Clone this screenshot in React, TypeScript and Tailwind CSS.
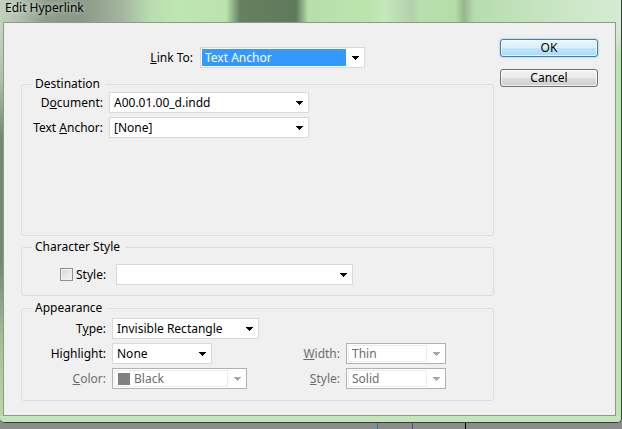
import React from 'react';

const Arrow = ({ disabled }: { disabled?: boolean }) => (
  <svg width="7" height="4" viewBox="0 0 7 4" shapeRendering="crispEdges">
    <path d="M0 0h7v1h-1v1h-1v1h-1v1h-1v-1h-1v-1h-1v-1h-1z" fill={disabled ? '#a6a6a6' : '#000'} />
  </svg>
);

interface SelectProps {
  value: string;
  className: string;
  disabled?: boolean;
  highlighted?: boolean;
  swatch?: boolean;
}

const Select: React.FC<SelectProps> = ({ value, className, disabled, highlighted, swatch }) => {
  if (disabled) {
    return (
      <div className={`flex h-[21px] border border-[#adb2b5] bg-white ${className}`}>
        <div className="m-[1px] flex flex-1 items-center border border-[#ececec] pl-[3px] text-[#6d6d6d]">
          {swatch && <span className="mr-[4px] h-[12px] w-[12px] bg-[#808080]" />}
          {value}
        </div>
        <div className="flex w-[17px] items-center justify-center">
          <Arrow disabled />
        </div>
      </div>
    );
  }
  return (
    <div className={`flex h-[21px] border border-[#d9d9d9] bg-white ${className}`}>
      {highlighted ? (
        <div className="m-[1px] flex-1 bg-[#3399ff] pl-[3px] leading-[17px] text-white">{value}</div>
      ) : (
        <div className="flex-1 pl-[4px] leading-[19px] text-black">{value}</div>
      )}
      <div className="flex w-[17px] items-center justify-center">
        <Arrow />
      </div>
    </div>
  );
};

const Group: React.FC<{ title: string; className: string; children: React.ReactNode }> = ({
  title,
  className,
  children,
}) => (
  <fieldset className={`rounded-[3px] border border-[#d5dfe5] ${className}`}>
    <legend className="ml-[10px] pl-[3px] pr-[6px] leading-[16px] text-black">{title}</legend>
    {children}
  </fieldset>
);

export default function App() {
  return (
    <div className="h-[429px] w-[622px] overflow-hidden bg-[linear-gradient(to_bottom,#454545,#8c8c8c)] font-['Noto_Sans',sans-serif] text-[12px]">
      <div className="flex h-[423px] flex-col overflow-hidden rounded-b-[5px] border-r border-b border-[#34403a] bg-[#c1e5b8]">
        {/* title bar */}
        <div className="h-[22px] bg-[linear-gradient(to_right,#c3d1bf_0px,#aebdaa_22px,#8e9c8a_45px,#8a9886_80px,#a2b39e_120px,#b9dcae_150px,#bee6b1_175px,#bce3ae_226px,#64805f_240px,#5e7a5a_296px,#b6deaa_308px,#bce5ae_372px,#c4e8be_385px,#b2d0ac_412px,#b8dfae_420px,#b3dea8_455px,#99b593_464px,#b6dcad_474px,#c6e4c0_540px,#d6ebd3_622px)] pl-[5px] leading-[16px] text-black [text-shadow:0_0_6px_rgba(255,255,255,0.8)]">
          Edit Hyperlink
        </div>

        <div className="flex">
          <div className="w-[3px] bg-[linear-gradient(to_bottom,#c8d5c4_0%,#aac0a5_15%,#70896b_30%,#728d6d_62%,#9fc096_80%,#b4d8aa_100%)]" />

          {/* client area */}
          <div className="flex h-[394px] w-[613px] border border-[#8c9b89] bg-[#f0f0f0]">
            <div className="flex w-[490px] flex-col pl-[17px] pt-[24px]">
              <div className="flex h-[21px] items-center">
                <span className="w-[172px] text-right leading-[21px] text-black">
                  <u>L</u>ink To:
                </span>
                <Select value="Text Anchor" className="ml-[7px] w-[165px]" highlighted />
              </div>

              <Group title="Destination" className="mt-[8px] h-[160px] w-[473px]">
                <div className="flex flex-col gap-[4px]">
                  <div className="flex items-center">
                    <span className="w-[81px] text-right leading-[21px]">
                      D<u>o</u>cument:
                    </span>
                    <Select value="A00.01.00_d.indd" className="ml-[6px] w-[200px]" />
                  </div>
                  <div className="flex items-center">
                    <span className="w-[81px] text-right leading-[21px]">
                      Text <u>A</u>nchor:
                    </span>
                    <Select value="[None]" className="ml-[6px] w-[200px]" />
                  </div>
                </div>
              </Group>

              <Group title="Character Style" className="mt-[3px] h-[57px] w-[473px]">
                <div className="flex items-center pl-[38px] pt-[9px]">
                  <span className="h-[13px] w-[13px] border border-[#8e8f8f] bg-[linear-gradient(135deg,#d6d6d6,#f7f7f7)] shadow-[inset_0_0_0_1px_#f2f2f2]" />
                  <span className="ml-[3px] w-[40px] leading-[21px]">Style:</span>
                  <Select value="" className="w-[237px]" />
                </div>
              </Group>

              <Group title="Appearance" className="mt-[4px] h-[101px] w-[473px]">
                <div className="flex flex-col gap-[4px] pt-[2px]">
                  <div className="flex items-center">
                    <span className="w-[84px] text-right leading-[21px]">
                      T<u>y</u>pe:
                    </span>
                    <Select value="Invisible Rectangle" className="ml-[6px] w-[147px]" />
                  </div>
                  <div className="flex items-center">
                    <div className="flex w-[230px] items-center">
                      <span className="w-[84px] text-right leading-[21px]">
                        Hi<u>g</u>hlight:
                      </span>
                      <Select value="None" className="ml-[6px] w-[100px]" />
                    </div>
                    <span className="w-[88px] text-right leading-[21px] text-[#6d6d6d]">
                      <u>W</u>idth:
                    </span>
                    <Select value="Thin" className="ml-[6px] w-[100px]" disabled />
                  </div>
                  <div className="flex items-center">
                    <div className="flex w-[230px] items-center">
                      <span className="w-[84px] text-right leading-[21px] text-[#6d6d6d]">
                        <u>C</u>olor:
                      </span>
                      <Select value="Black" className="ml-[6px] w-[135px]" disabled swatch />
                    </div>
                    <span className="w-[88px] text-right leading-[21px] text-[#6d6d6d]">
                      <u>S</u>tyle:
                    </span>
                    <Select value="Solid" className="ml-[6px] w-[100px]" disabled />
                  </div>
                </div>
              </Group>
            </div>

            {/* buttons */}
            <div className="ml-[6px] flex flex-col gap-[12px] pt-[16px]">
              <button className="h-[18px] w-[98px] rounded-[3px] border border-[#3c7fb1] bg-[linear-gradient(to_bottom,#eaf6fd_0%,#d9f0fc_50%,#bee6fd_51%,#a7d9f5_100%)] leading-[16px] text-black shadow-[inset_0_0_0_1px_rgba(255,255,255,0.7),0_0_2px_#5fb6e6]">
                OK
              </button>
              <button className="h-[18px] w-[98px] rounded-[3px] border border-[#707070] bg-[linear-gradient(to_bottom,#f2f2f2_0%,#ebebeb_50%,#dddddd_51%,#cfcfcf_100%)] leading-[16px] text-black shadow-[inset_0_0_0_1px_rgba(255,255,255,0.7)]">
                Cancel
              </button>
            </div>
          </div>

          <div className="flex-1 bg-[linear-gradient(to_bottom,#dde9da_0%,#d2e6cd_4%,#bde2b3_8%,#bfe3b5_100%)]" />
        </div>

        <div className="flex-1 bg-[#c2e5ba]" />
      </div>
      <div className="flex h-[6px]">
        <span className="ml-[377px] w-[1px] bg-[#3a6fd0]" />
        <span className="ml-[34px] w-[1px] bg-[#6a2fb0]" />
        <span className="ml-[52px] w-[1px] bg-[#000]" />
      </div>
    </div>
  );
}
